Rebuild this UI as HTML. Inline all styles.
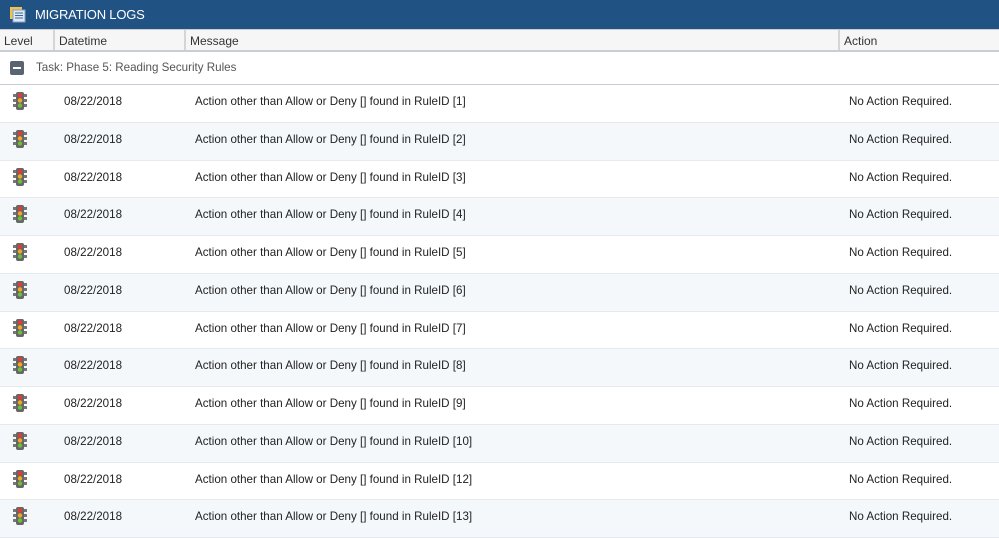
<!DOCTYPE html>
<html><head><style>
body{margin:0;width:999px;height:527px;overflow:hidden;background:#fff;font-family:"Liberation Sans",sans-serif;color:#333;position:relative}
.top{position:absolute;left:0;top:0;width:999px;height:29px;background:#215284;color:#fff;font-size:13px;line-height:29px}
.top span{position:absolute;left:35px;top:0;letter-spacing:-0.2px}
.hd{position:absolute;top:29px;left:0;width:999px;height:20px;background:#f6f6f6;border-bottom:2px solid #c9ced4;border-top:1px solid #ccc;font-size:12px}
.hd div{position:absolute;top:0;height:20px;line-height:22px;padding-left:4px;box-sizing:border-box;border-left:2px solid #d5d5d5}
.task{position:absolute;top:51px;left:0;width:999px;height:33px;border-bottom:1px solid #c5ccd3;font-size:11.6px;color:#555;line-height:34px}
.row{position:absolute;left:0;width:999px;height:37px;border-bottom:1px solid #e6eaee;font-size:11.6px;color:#222;background:#fff}
.row span{position:absolute;top:0;line-height:34px}
.alt{background:#f5f8fb}
</style></head><body>
<div class="top"><svg style="position:absolute;left:10px;top:6px" width="16" height="17" viewBox="0 0 16 17"><rect x="0" y="1" width="12" height="12" fill="#f2c14e"/><rect x="3" y="4" width="12" height="12" fill="#dfe9f5" stroke="#7fa3c8"/><path d="M5 7h8M5 9.5h8M5 12h8" stroke="#3d6a9a"/></svg><span>MIGRATION LOGS</span></div>
<div class="hd">
<div style="left:0;width:53px;border-left:none">Level</div>
<div style="left:53px;width:131px">Datetime</div>
<div style="left:184px;width:654px">Message</div>
<div style="left:838px;width:161px">Action</div>
</div>
<div class="task"><svg style="position:absolute;left:10px;top:10px" width="14" height="14"><rect width="14" height="14" rx="2" fill="#5b6572"/><rect x="3" y="6" width="8" height="2" fill="#fff"/></svg><span style="position:absolute;left:36px">Task: Phase 5: Reading Security Rules</span></div>
<div id="rows"></div>
<script>
var ids=[1,2,3,4,5,6,7,8,9,10,12,13],h='';
for(var i=0;i<12;i++){var t=Math.round(85+i*37.75);var n=Math.round(85+(i+1)*37.75)-t-1;
h+='<div class="row'+(i%2?' alt':'')+'" style="top:'+t+'px;height:'+n+'px"><svg style="position:absolute;left:13px;top:7px" width="14" height="18" viewBox="0 0 14 18"><rect x="0" y="2" width="14" height="3" fill="#777"/><rect x="0" y="7" width="14" height="3" fill="#777"/><rect x="0" y="12" width="14" height="3" fill="#777"/><rect x="3" y="0" width="8" height="18" rx="2" fill="#666"/><circle cx="7" cy="3.5" r="2.2" fill="#e53935"/><circle cx="7" cy="8.5" r="2.2" fill="#f5a623"/><circle cx="7" cy="13.5" r="2.2" fill="#6bbf3a"/></svg><span style="left:64px">08/22/2018</span><span style="left:195px">Action other than Allow or Deny [] found in RuleID ['+ids[i]+']</span><span style="left:849px">No Action Required.</span></div>';}
document.getElementById('rows').innerHTML=h;
</script>
</body></html>
